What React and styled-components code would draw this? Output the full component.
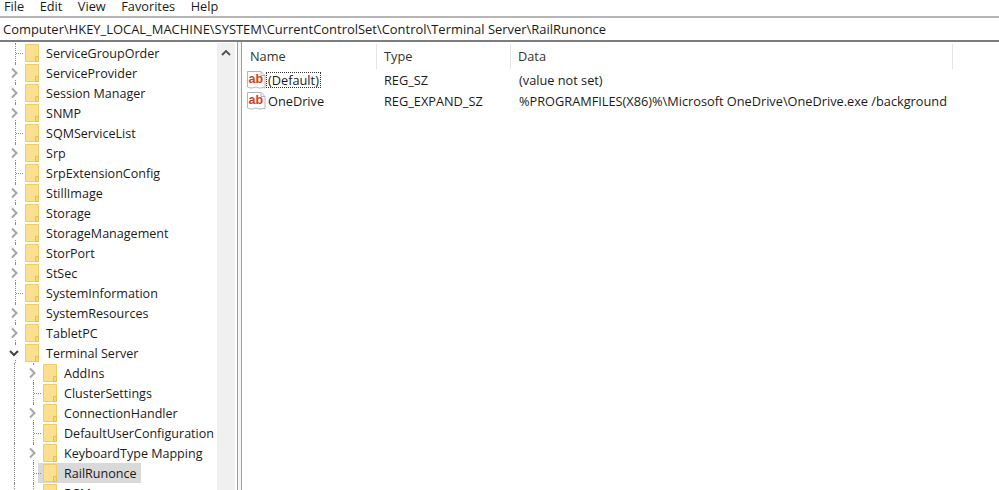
import React from 'react';
import styled, {createGlobalStyle} from 'styled-components';

const GlobalStyle = createGlobalStyle`
  html, body, #root { margin: 0; padding: 0; height: 100%; overflow: hidden; background: #fff; }
  body { font-family: "Open Sans", "Noto Sans", sans-serif; font-size: 12.75px; color: #1a1a1a; }
`;

const Window = styled.div`
  width: 999px;
  height: 490px;
  display: flex;
  flex-direction: column;
  overflow: hidden;
`;
const MenuBar = styled.div`
  height: 16px;
  display: flex;
  flex: none;
  gap: 15.5px;
  padding: 0 0 4px 4px;
  box-sizing: border-box;
  align-items: center;
  line-height: 12px;
`;
const AddressBar = styled.div`
  height: 26px;
  flex: none;
  display: flex;
  align-items: center;
  padding-left: 3px;
  font-size: 12.95px;
  border-top: 2px solid #b4b4b4;
  border-bottom: 2px solid #7d7d7d;
  box-sizing: border-box;
`;
const Body = styled.div`
  flex: 1;
  display: flex;
  min-height: 0;
`;
const TreePane = styled.div`
  width: 217px;
  flex: none;
  padding-top: 1px;
  overflow: hidden;
  font-size: 12.55px;
`;
const Row = styled.div`
  height: 20px;
  display: flex;
  align-items: center;
  padding-left: ${p => p.$indent}px;
  position: relative;
`;
const Guide = styled.span`
  position: absolute;
  left: ${p => p.$x}px;
  top: 0;
  height: 20px;
  border-left: 1px dotted #8a8a8a;
`;
const Twig = styled.span`
  position: absolute;
  left: ${p => p.$x}px;
  top: 10px;
  width: 7px;
  border-top: 1px dotted #8a8a8a;
`;
const Chevron = styled.svg`
  position: absolute;
  left: ${p => p.$x}px;
  top: 3px;
  width: 14px;
  height: 14px;
  background: #fff;
`;
const Entry = styled.div`
  display: flex;
  align-items: center;
  height: 20px;
  padding: 0 5px 0 5px;
  margin-left: -5px;
  background: ${p => (p.$selected ? '#d9d9d9' : 'transparent')};
`;
const Label = styled.span`
  margin-left: 7px;
  white-space: nowrap;
`;
const Scrollbar = styled.div`
  width: 18px;
  flex: none;
  background: #f0f0f0;
  display: flex;
  justify-content: center;
  align-items: flex-start;
  margin-top: 1px;
  padding-top: 6px;
  box-sizing: border-box;
`;
const Splitter = styled.div`
  width: 5px;
  flex: none;
  background: #f6f6f6;
  border-left: 1px solid #a0a0a0;
  border-right: 1px solid #a0a0a0;
  box-sizing: border-box;
  margin-left: 2px;
`;
const ListPane = styled.div`
  flex: 1;
  min-width: 0;
  padding-top: 2px;
`;
const HeaderRow = styled.div`
  display: grid;
  grid-template-columns: 134px 134px 442px;
  height: 25px;
  padding-left: 1px;
`;
const HeaderCell = styled.div`
  padding-left: 7px;
  line-height: 25px;
  border-right: 1px solid #e5e5e5;
  color: #333;
`;
const DataRow = styled.div`
  display: grid;
  grid-template-columns: 137px 135px auto;
  height: 21px;
  align-items: center;
  padding-left: 5px;
`;
const NameCell = styled.div`
  display: flex;
  align-items: center;
`;
const NameText = styled.span`
  padding: 0 2px;
  line-height: 16px;
  outline: ${p => (p.$focused ? '1px dotted #333' : 'none')};
  outline-offset: -1px;
`;
const Cell = styled.div`
  white-space: nowrap;
`;

const FolderIcon = () => (
  <svg width="14" height="18" viewBox="0 0 14 18" style={{flex: 'none'}}>
    <path d="M.5.5h13v17H.5z" fill="#fce08f" stroke="#f0cb68" />
    <path d="M10.5 12.5h3v5h-3z" fill="#f8d878" stroke="#e8bf55" />
  </svg>
);

const ValueIcon = () => (
  <svg width="19" height="18" viewBox="0 0 19 18" style={{flex: 'none'}}>
    <path d="M.5.5h13.500l4 4v12.500c-2-1.500-4 .5-6 0s-3-1.500-5-.5-4 .5-6.500-.5z" fill="#fff" stroke="#b5b5b5" />
    <path d="M14 .5v4h4" fill="none" stroke="#b5b5b5" />
    <text x="1.500" y="12" fontFamily="Liberation Sans" fontWeight="700" fontSize="12.500" fill="#d8401c">ab</text>
  </svg>
);

const ChevronIcon = ({x, open}) => (
  <Chevron $x={x} viewBox="0 0 14 14">
    <path d={open ? 'M3 5l4 4 4-4' : 'M5 2.500l4.500 4.500-4.500 4.500'} fill="none" stroke={open ? '#444' : '#a6a6a6'} strokeWidth="2" />
  </Chevron>
);

const rows = [
  ['ServiceGroupOrder', 0, false],
  ['ServiceProvider', 0, true],
  ['Session Manager', 0, true],
  ['SNMP', 0, true],
  ['SQMServiceList', 0, false],
  ['Srp', 0, true],
  ['SrpExtensionConfig', 0, false],
  ['StillImage', 0, true],
  ['Storage', 0, true],
  ['StorageManagement', 0, true],
  ['StorPort', 0, true],
  ['StSec', 0, true],
  ['SystemInformation', 0, false],
  ['SystemResources', 0, true],
  ['TabletPC', 0, true],
  ['Terminal Server', 0, 'open'],
  ['AddIns', 1, true],
  ['ClusterSettings', 1, false],
  ['ConnectionHandler', 1, true],
  ['DefaultUserConfiguration', 1, false],
  ['KeyboardType Mapping', 1, true],
  ['RailRunonce', 1, false],
  ['RCM', 1, false],
];

const TreeRow = ({name, depth, kind}) => {
  const guideX = depth ? 33 : 15;
  return (
    <Row $indent={depth ? 43 : 25}>
      {depth === 1 && <Guide $x={14} />}
      <Guide $x={guideX} />
      {!kind && <Twig $x={guideX + 1} />}
      {kind && <ChevronIcon x={guideX - 8} open={kind === 'open'} />}
      <Entry $selected={name === 'RailRunonce'}>
        <FolderIcon />
        <Label>{name}</Label>
      </Entry>
    </Row>
  );
};

const App = () => (
  <Window>
    <GlobalStyle />
    <MenuBar>
      <span>File</span><span>Edit</span><span>View</span><span>Favorites</span><span>Help</span>
    </MenuBar>
    <AddressBar>Computer\HKEY_LOCAL_MACHINE\SYSTEM\CurrentControlSet\Control\Terminal Server\RailRunonce</AddressBar>
    <Body>
      <TreePane>
        {rows.map(([name, depth, kind]) => <TreeRow key={name} name={name} depth={depth} kind={kind} />)}
      </TreePane>
      <Scrollbar>
        <svg width="10" height="7" viewBox="0 0 10 7"><path d="M1 6l4-4 4 4" fill="none" stroke="#505050" strokeWidth="1.8" /></svg>
      </Scrollbar>
      <Splitter />
      <ListPane>
        <HeaderRow>
          <HeaderCell>Name</HeaderCell>
          <HeaderCell>Type</HeaderCell>
          <HeaderCell>Data</HeaderCell>
        </HeaderRow>
        <DataRow>
          <NameCell><ValueIcon /><NameText $focused>(Default)</NameText></NameCell>
          <Cell>REG_SZ</Cell>
          <Cell>(value not set)</Cell>
        </DataRow>
        <DataRow>
          <NameCell><ValueIcon /><NameText>OneDrive</NameText></NameCell>
          <Cell>REG_EXPAND_SZ</Cell>
          <Cell>%PROGRAMFILES(X86)%\Microsoft OneDrive\OneDrive.exe /background</Cell>
        </DataRow>
      </ListPane>
    </Body>
  </Window>
);

export default App;
